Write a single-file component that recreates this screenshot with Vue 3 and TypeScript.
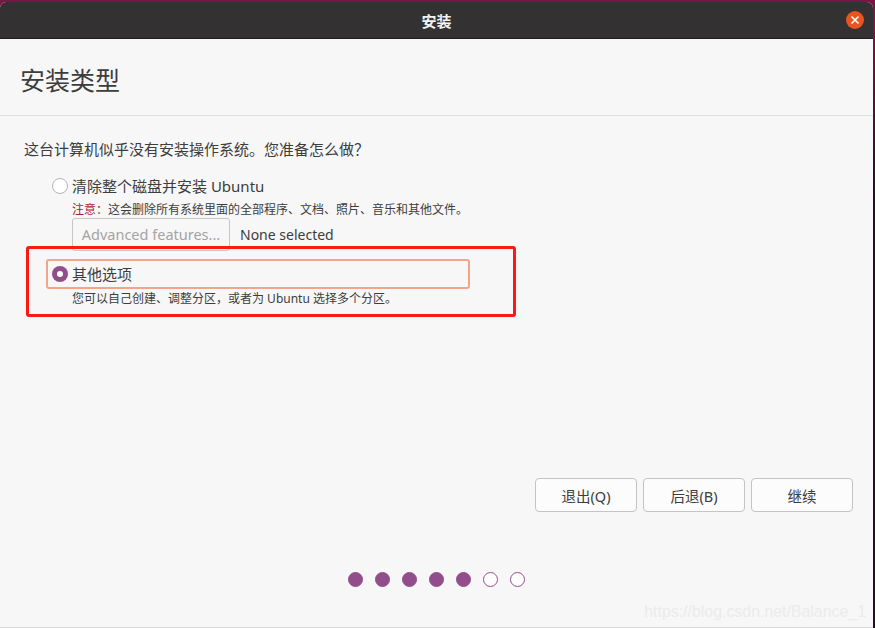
<template>
  <div class="desktop">
    <div class="window">
      <header class="titlebar">
        <span class="titlebar-text">安装</span>
        <button class="close-btn" aria-label="关闭">
          <svg width="10" height="10" viewBox="0 0 10 10">
            <path d="M1.5 1.5 L8.5 8.5 M8.5 1.5 L1.5 8.5" stroke="#fff" stroke-width="1.6" fill="none" />
          </svg>
        </button>
      </header>

      <div class="page-title">
        <h1>安装类型</h1>
      </div>

      <main class="content">
        <p class="question">这台计算机似乎没有安装操作系统。您准备怎么做？</p>

        <div class="option first">
          <div class="option-row">
            <span class="radio"></span>
            <span class="option-label">清除整个磁盘并安装 Ubuntu</span>
          </div>
          <p class="hint"><span class="warn">注意：</span>这会删除所有系统里面的全部程序、文档、照片、音乐和其他文件。</p>
          <div class="advanced">
            <button class="adv-btn" disabled>Advanced features...</button>
            <span class="adv-value">None selected</span>
          </div>
        </div>

        <div class="option second">
          <div class="option-row focused">
            <span class="radio checked"></span>
            <span class="option-label">其他选项</span>
          </div>
          <p class="hint">您可以自己创建、调整分区，或者为 Ubuntu 选择多个分区。</p>
        </div>

        <div class="actions">
          <button v-for="label in BUTTONS" :key="label" class="action-btn">{{ label }}</button>
        </div>

        <div class="steps">
          <span
            v-for="step in STEPS"
            :key="step"
            :class="['step', { done: step <= DONE_STEPS }]"
          ></span>
        </div>
      </main>

      <div class="annotation"></div>
      <div class="watermark">https://blog.csdn.net/Balance_1</div>
    </div>
  </div>
</template>

<script setup lang="ts">
const BUTTONS: string[] = ['退出(Q)', '后退(B)', '继续']
const STEPS: number[] = [1, 2, 3, 4, 5, 6, 7]
const DONE_STEPS = 5
</script>

<style>
html,
body {
  margin: 0;
  background: #2c0a24;
}
</style>

<style scoped>
.desktop {
  width: 875px;
  height: 628px;
  box-sizing: border-box;
  padding: 2px 2px 0 0;
  background: linear-gradient(180deg, #7a1546 0, #7a1546 30px, #2c0a24 200px);
  overflow: hidden;
  font-family: "Noto Sans", "Noto Sans CJK SC", sans-serif;
  color: #3d3d3d;
}

.window {
  position: relative;
  width: 873px;
  height: 626px;
  box-sizing: border-box;
  background: #f7f7f7;
  border-bottom: 1px solid #dcdcdc;
  display: flex;
  flex-direction: column;
  border-radius: 6px 6px 0 0;
  overflow: hidden;
}

.titlebar {
  position: relative;
  height: 37px;
  flex: none;
  box-sizing: border-box;
  background: #333132;
  border-bottom: 1px solid #1f1e1e;
  display: flex;
  align-items: center;
  justify-content: center;
}

.titlebar-text {
  color: #f2f2f2;
  font-size: 15px;
  font-weight: 700;
}

.close-btn {
  position: absolute;
  right: 9px;
  top: 9px;
  width: 18px;
  height: 18px;
  padding: 0;
  border: none;
  border-radius: 50%;
  background: #e95420;
  display: flex;
  align-items: center;
  justify-content: center;
}

.page-title {
  height: 77px;
  flex: none;
  box-sizing: border-box;
  border-bottom: 1px solid #dedede;
  padding: 24px 0 0 20px;
}

.page-title h1 {
  margin: 0;
  font-size: 25px;
  line-height: 34px;
  font-weight: 400;
  color: #3d3d3d;
}

.content {
  flex: 1;
  display: flex;
  flex-direction: column;
  padding: 0 20px 0 24px;
}

.question {
  margin: 23px 0 0;
  font-size: 15px;
  line-height: 20px;
}

.option.first {
  margin: 17px 0 0 28px;
}

.option-row {
  display: flex;
  align-items: center;
  gap: 4px;
  height: 20px;
}

.radio {
  width: 16px;
  height: 16px;
  box-sizing: border-box;
  flex: none;
  border: 1px solid #b5b5b5;
  border-radius: 50%;
  background: #fff;
  display: flex;
  align-items: center;
  justify-content: center;
}

.radio.checked {
  border: none;
  background: #924d8b;
}

.radio.checked::after {
  content: "";
  width: 6px;
  height: 6px;
  border-radius: 50%;
  background: #fff;
}

.option-label {
  font-size: 15px;
  line-height: 20px;
}

.hint {
  margin: 6px 0 0 20px;
  font-size: 12px;
  line-height: 16px;
}

.warn {
  color: #a51d2d;
}

.advanced {
  display: flex;
  align-items: center;
  gap: 10px;
  margin: 0 0 0 20px;
}

.adv-btn {
  width: 158px;
  height: 33px;
  box-sizing: border-box;
  padding: 0 0 2px;
  border: 1px solid #c6c6c6;
  border-radius: 3px;
  background: #f7f7f7;
  color: #a4a4a4;
  font-family: inherit;
  font-size: 14.5px;
}

.adv-value {
  font-size: 14px;
}

.option.second {
  margin: 8px 0 0 22px;
}

.focused {
  width: 424px;
  height: 30px;
  box-sizing: border-box;
  padding-left: 4px;
  border: 2px solid #f3a58c;
  border-radius: 3px;
}

.second .hint {
  margin: 2px 0 0 26px;
}

.actions {
  display: flex;
  justify-content: flex-end;
  gap: 6px;
  margin-top: 171px;
}

.action-btn {
  width: 102px;
  height: 34px;
  box-sizing: border-box;
  padding: 0;
  border: 1px solid #c4c4c4;
  border-radius: 4px;
  background: #fcfcfc;
  color: #3d3d3d;
  font-family: inherit;
  font-size: 14.5px;
}

.steps {
  display: flex;
  justify-content: center;
  gap: 12px;
  margin-top: 60px;
  padding-right: 4px;
}

.step {
  width: 15px;
  height: 15px;
  box-sizing: border-box;
  border: 1px solid #924d8b;
  border-radius: 50%;
  background: #fff;
}

.step.done {
  background: #924d8b;
}

.annotation {
  position: absolute;
  left: 26px;
  top: 244px;
  width: 490px;
  height: 71px;
  box-sizing: border-box;
  border: 3px solid #fb1a12;
  border-radius: 3px;
  pointer-events: none;
}

.watermark {
  position: absolute;
  right: 7px;
  bottom: 6px;
  font-family: "Liberation Sans", sans-serif;
  font-size: 15.9px;
  color: #ebebeb;
}
</style>
